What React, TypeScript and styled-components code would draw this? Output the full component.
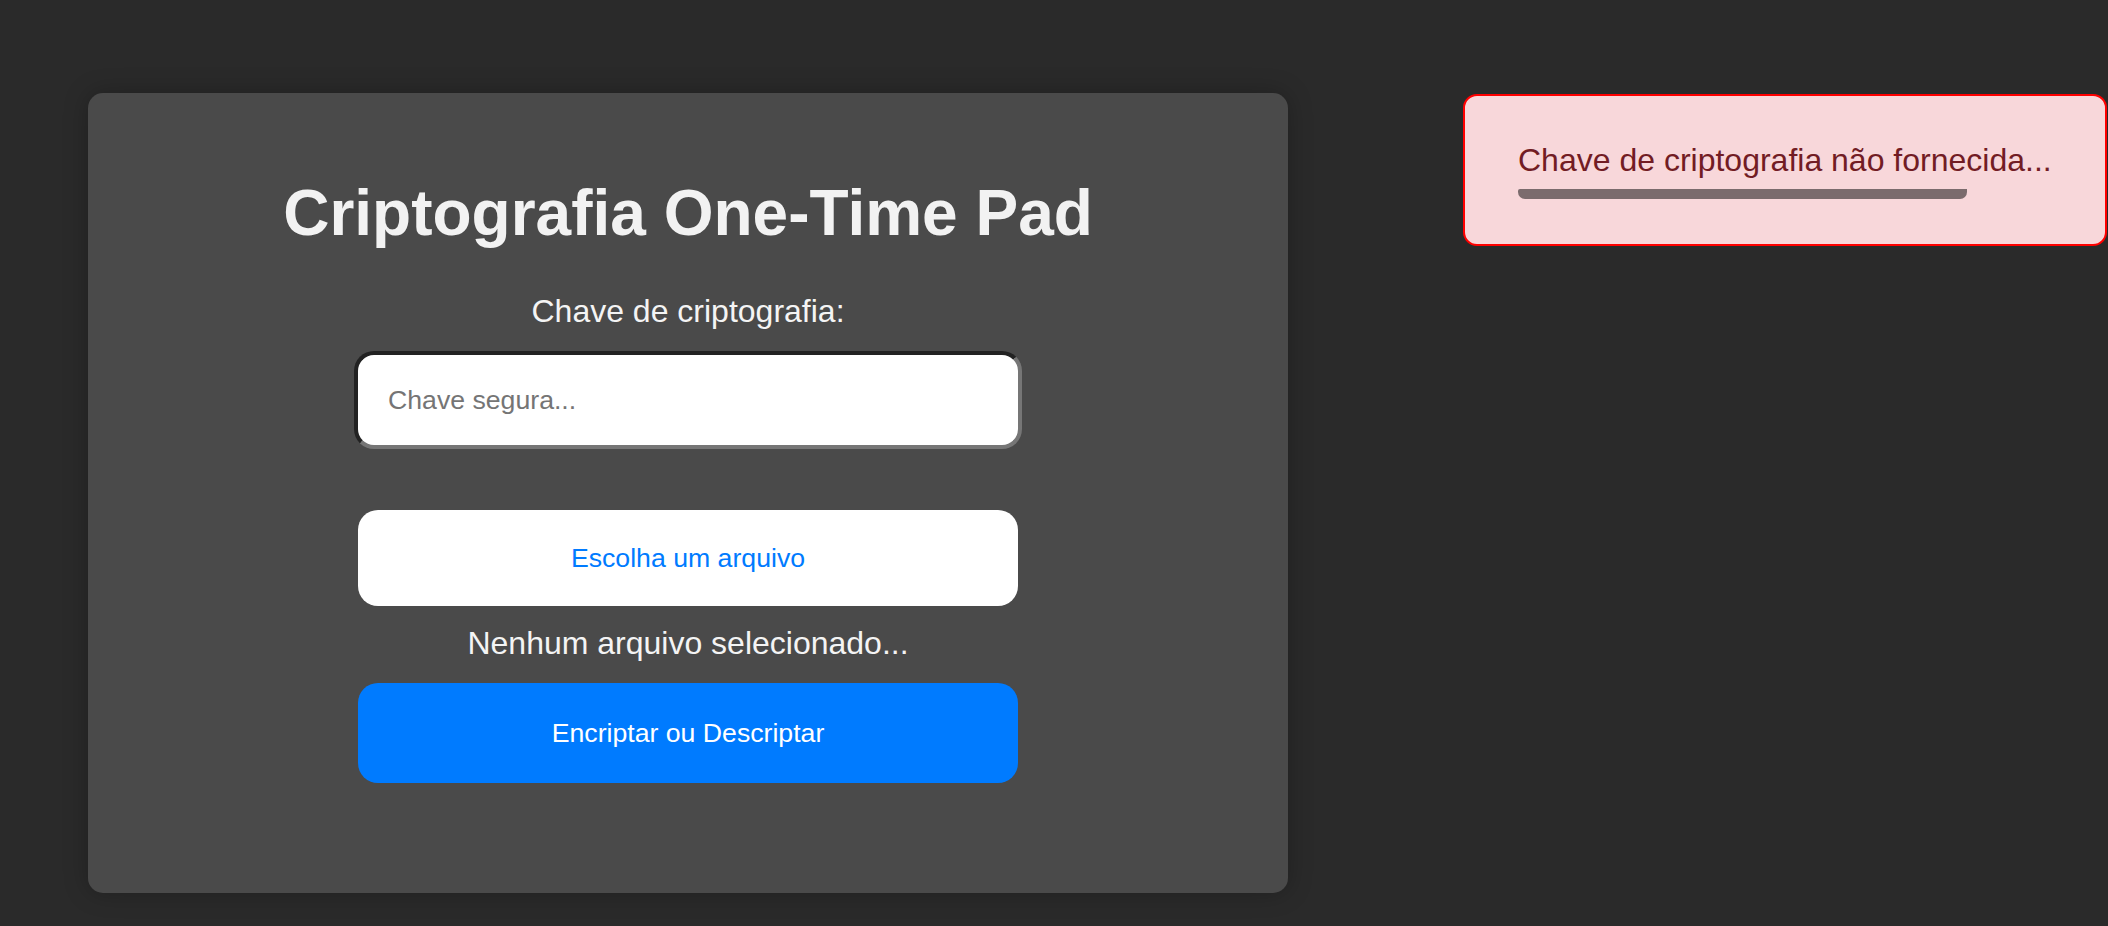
import React from "react";
import styled, { createGlobalStyle } from "styled-components";

const GlobalStyle = createGlobalStyle`
  html, body {
    margin: 0;
    padding: 0;
    background: #2a2a2a;
    font-family: "Liberation Sans", Arial, Helvetica, sans-serif;
  }
`;

export default function App() {
  const progress = 84; // toast timer left

  return (
    <>
      <GlobalStyle />
      <Page>
        <Card>
          <Title>Criptografia One-Time Pad</Title>
          <Label htmlFor="key">Chave de criptografia:</Label>
          <KeyInput id="key" type="text" placeholder="Chave segura..." />
          <Button $variant="light">Escolha um arquivo</Button>
          <FileName>Nenhum arquivo selecionado...</FileName>
          <Button $variant="primary" $tall>
            Encriptar ou Descriptar
          </Button>
        </Card>

        <Toast>
          <ToastText>Chave de criptografia não fornecida...</ToastText>
          <ProgressBar style={{ width: `${progress}%` }} />
        </Toast>
      </Page>
    </>
  );
}

const Page = styled.div`
  display: flex;
  align-items: flex-start;
  justify-content: space-between;
  min-height: 926px;
  box-sizing: border-box;
  padding: 93px 1px 0 88px;
`;

const Card = styled.div`
  width: 1200px;
  box-sizing: border-box;
  padding: 40px 40px 110px;
  background: #4a4a4a;
  border-radius: 15px;
  box-shadow: 0 0 24px rgba(0, 0, 0, 0.25);
  display: flex;
  flex-direction: column;
  align-items: center;
`;

const Title = styled.h1`
  margin: 43px 0 43px;
  font-size: 64px;
  line-height: 74px;
  font-weight: bold;
  color: #f2f2f2;
`;

const Label = styled.label`
  display: block;
  margin-bottom: 21px;
  font-size: 32px;
  line-height: 37px;
  color: #f4f4f4;
`;

const KeyInput = styled.input`
  width: 668px;
  height: 98px;
  box-sizing: border-box;
  margin: 0 0 61px;
  padding: 0 30px;
  border: 4px solid;
  border-color: #222222 #767676 #767676 #222222;
  border-radius: 20px;
  background: #ffffff;
  font-family: inherit;
  font-size: 26.67px;
  color: #222;
  outline: none;

  &::placeholder {
    color: #757575;
  }
`;

const Button = styled.button<{ $variant: "light" | "primary"; $tall?: boolean }>`
  width: 660px;
  height: ${(p) => (p.$tall ? "100px" : "96px")};
  border: none;
  border-radius: 20px;
  font-family: inherit;
  font-size: 26.67px;
  cursor: pointer;
  background: ${(p) => (p.$variant === "primary" ? "#007bff" : "#ffffff")};
  color: ${(p) => (p.$variant === "primary" ? "#ffffff" : "#007bff")};
`;

const FileName = styled.p`
  margin: 19px 0 21px;
  font-size: 32px;
  line-height: 37px;
  color: #f4f4f4;
`;

const Toast = styled.div`
  width: 644px;
  margin-top: 1px;
  box-sizing: border-box;
  padding: 46px 53px 45px;
  background: #f8d7da;
  border: 2px solid #ff0000;
  border-radius: 14px;
`;

const ToastText = styled.div`
  font-size: 32px;
  line-height: 37px;
  color: #721c24;
  white-space: nowrap;
`;

const ProgressBar = styled.div`
  height: 10px;
  margin-top: 10px;
  background: #7b6b6d;
  border-radius: 2px 0 7px 7px;
`;
